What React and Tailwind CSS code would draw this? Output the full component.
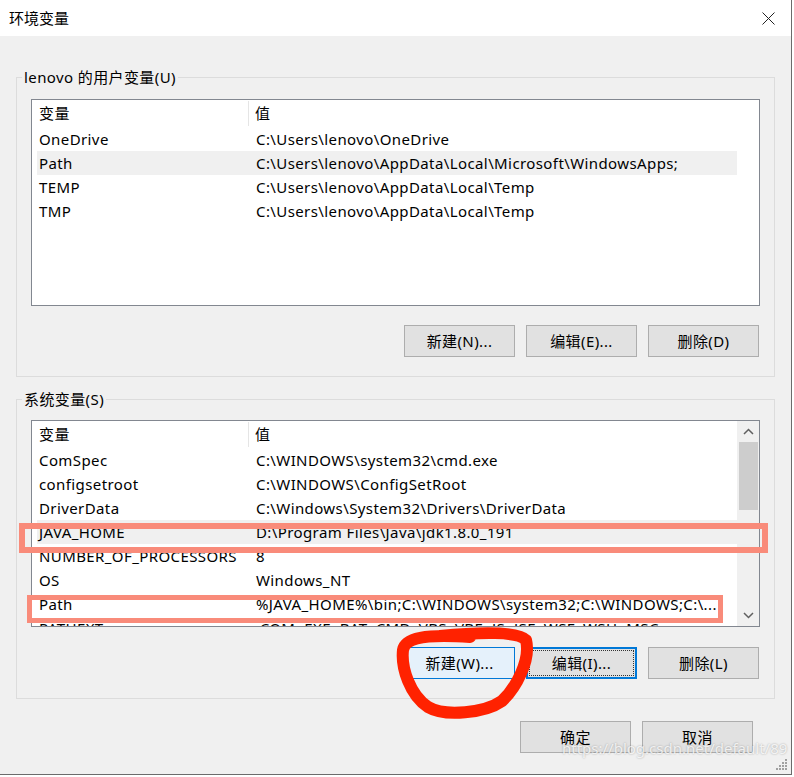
import React from "react";

const userVars = [
  ["OneDrive", "C:\\Users\\lenovo\\OneDrive"],
  ["Path", "C:\\Users\\lenovo\\AppData\\Local\\Microsoft\\WindowsApps;"],
  ["TEMP", "C:\\Users\\lenovo\\AppData\\Local\\Temp"],
  ["TMP", "C:\\Users\\lenovo\\AppData\\Local\\Temp"],
];

const systemVars = [
  ["ComSpec", "C:\\WINDOWS\\system32\\cmd.exe"],
  ["configsetroot", "C:\\WINDOWS\\ConfigSetRoot"],
  ["DriverData", "C:\\Windows\\System32\\Drivers\\DriverData"],
  ["JAVA_HOME", "D:\\Program Files\\Java\\jdk1.8.0_191"],
  ["NUMBER_OF_PROCESSORS", "8"],
  ["OS", "Windows_NT"],
  ["Path", "%JAVA_HOME%\\bin;C:\\WINDOWS\\system32;C:\\WINDOWS;C:\\..."],
  ["PATHEXT", ".COM;.EXE;.BAT;.CMD;.VBS;.VBE;.JS;.JSE;.WSF;.WSH;.MSC"],
];

function Button({ children, variant }) {
  let cls = "border border-[#adadad] bg-[#e1e1e1]";
  if (variant === "hover") cls = "border border-[#0078d7] bg-[#e5f1fb]";
  if (variant === "focus")
    cls = "border-2 border-[#0078d7] bg-[#e1e1e1] outline-1 outline-dotted outline-[#333] -outline-offset-4";
  return (
    <button className={`w-[111px] h-[32px] flex items-center justify-center text-[15px] text-black ${cls}`}>
      {children}
    </button>
  );
}

function VarList({ rows, selected, scrollbar }) {
  return (
    <div className="h-[207px] border border-[#828790] bg-white flex overflow-hidden">
      <div className="ml-[5px] w-[700px] flex flex-col">
        <div className="h-[27px] flex items-center shrink-0">
          <div className="w-[212px] h-[25px] pl-[2px] flex items-center border-r border-[#e5e5e5]">变量</div>
          <div className="pl-[6px]">值</div>
        </div>
        {rows.map(([name, value], i) => (
          <div
            key={name + i}
            className={`h-[24px] shrink-0 flex items-center whitespace-nowrap ${i === selected ? "bg-[#f0f0f0]" : ""}`}
          >
            <div className="w-[212px] pl-[2px]">{name}</div>
            <div className="pl-[7px]">{value}</div>
          </div>
        ))}
      </div>
      {scrollbar && (
        <div className="w-[22px] bg-[#f0f0f0] flex flex-col items-center">
          <div className="h-[21px] w-full flex items-center justify-center">
            <svg width="11" height="7" viewBox="0 0 11 7">
              <path d="M1 6 L5.5 1.5 L10 6" fill="none" stroke="#606060" strokeWidth="1.5" />
            </svg>
          </div>
          <div className="w-[19px] h-[68px] bg-[#cdcdcd]" />
          <div className="flex-1" />
          <div className="h-[22px] w-full flex items-center justify-center">
            <svg width="11" height="7" viewBox="0 0 11 7">
              <path d="M1 1 L5.5 5.5 L10 1" fill="none" stroke="#606060" strokeWidth="1.5" />
            </svg>
          </div>
        </div>
      )}
    </div>
  );
}

export default function App() {
  return (
    <div
      className="relative w-[792px] h-[775px] border-r border-b border-[#6b6b6b] bg-[#f0f0f0] text-[15px] tracking-[0.4px] text-black overflow-hidden"
      style={{ fontFamily: '"Noto Sans", "Noto Sans CJK SC", sans-serif' }}
    >
      <div className="h-[36px] bg-white flex items-center justify-between pl-[9px] pr-[16px]">
        <span className="tracking-normal">环境变量</span>
        <svg width="13" height="13" viewBox="0 0 13 13">
          <path d="M0.5 0.5 L12.5 12.5 M12.5 0.5 L0.5 12.5" stroke="#222" strokeWidth="1" />
        </svg>
      </div>

      <div className="px-[16px] pt-[31px]">
        <fieldset className="border border-[#dcdcdc]">
          <legend className="ml-[5px] px-[2px] h-[20px] leading-[20px]">lenovo 的用户变量(U)</legend>
          <div className="pl-[14px] pr-[14px] pt-[12px] pb-[19px]">
            <VarList rows={userVars} selected={1} />
            <div className="flex justify-end gap-[11px] mt-[19px] pr-[1px]">
              <Button>新建(N)...</Button>
              <Button>编辑(E)...</Button>
              <Button>删除(D)</Button>
            </div>
          </div>
        </fieldset>

        <fieldset className="border border-[#dcdcdc] mt-[12px]">
          <legend className="ml-[5px] px-[2px] h-[20px] leading-[20px]">系统变量(S)</legend>
          <div className="pl-[14px] pr-[14px] pt-[11px] pb-[19px]">
            <VarList rows={systemVars} selected={3} scrollbar />
            <div className="flex justify-end gap-[11px] mt-[20px] pr-[1px]">
              <Button variant="hover">新建(W)...</Button>
              <Button variant="focus">编辑(I)...</Button>
              <Button>删除(L)</Button>
            </div>
          </div>
        </fieldset>

        <div className="flex justify-end gap-[11px] mt-[22px] pr-[22px]">
          <Button>确定</Button>
          <Button>取消</Button>
        </div>
      </div>

      {/* annotations drawn over the dialog */}
      <div className="absolute left-[19px] top-[523px] w-[749px] h-[30px] border-[6px] border-[#f98b7a] pointer-events-none" />
      <div className="absolute left-[27px] top-[595px] w-[696px] h-[28px] border-[5px] border-[#f98b7a] pointer-events-none" />
      <svg className="absolute left-0 top-0 pointer-events-none" width="792" height="775" viewBox="0 0 792 775">
        <path
          d="M440 636 C480 632 518 631 526 640 C531 660 516 688 502 701 C485 713 445 717 428 707 C410 695 401 668 403 650 C405 638 425 634 470 637"
          fill="none"
          stroke="#ff2200"
          strokeWidth="12"
          strokeLinecap="round"
          strokeLinejoin="round"
        />
      </svg>
      <div className="absolute left-[562px] top-[737px] text-[15px] tracking-normal text-white/80 pointer-events-none [text-shadow:0_0_2px_rgba(0,0,0,0.35)]">
        https://blog.csdn.net/default/89
      </div>
      <svg className="absolute right-[3px] bottom-[3px]" width="12" height="12" viewBox="0 0 12 12">
        <g fill="#a0a0a0">
          <rect x="9" y="0" width="2" height="2" />
          <rect x="6" y="3" width="2" height="2" />
          <rect x="9" y="3" width="2" height="2" />
          <rect x="3" y="6" width="2" height="2" />
          <rect x="6" y="6" width="2" height="2" />
          <rect x="9" y="6" width="2" height="2" />
          <rect x="0" y="9" width="2" height="2" />
          <rect x="3" y="9" width="2" height="2" />
          <rect x="6" y="9" width="2" height="2" />
          <rect x="9" y="9" width="2" height="2" />
        </g>
      </svg>
    </div>
  );
}
